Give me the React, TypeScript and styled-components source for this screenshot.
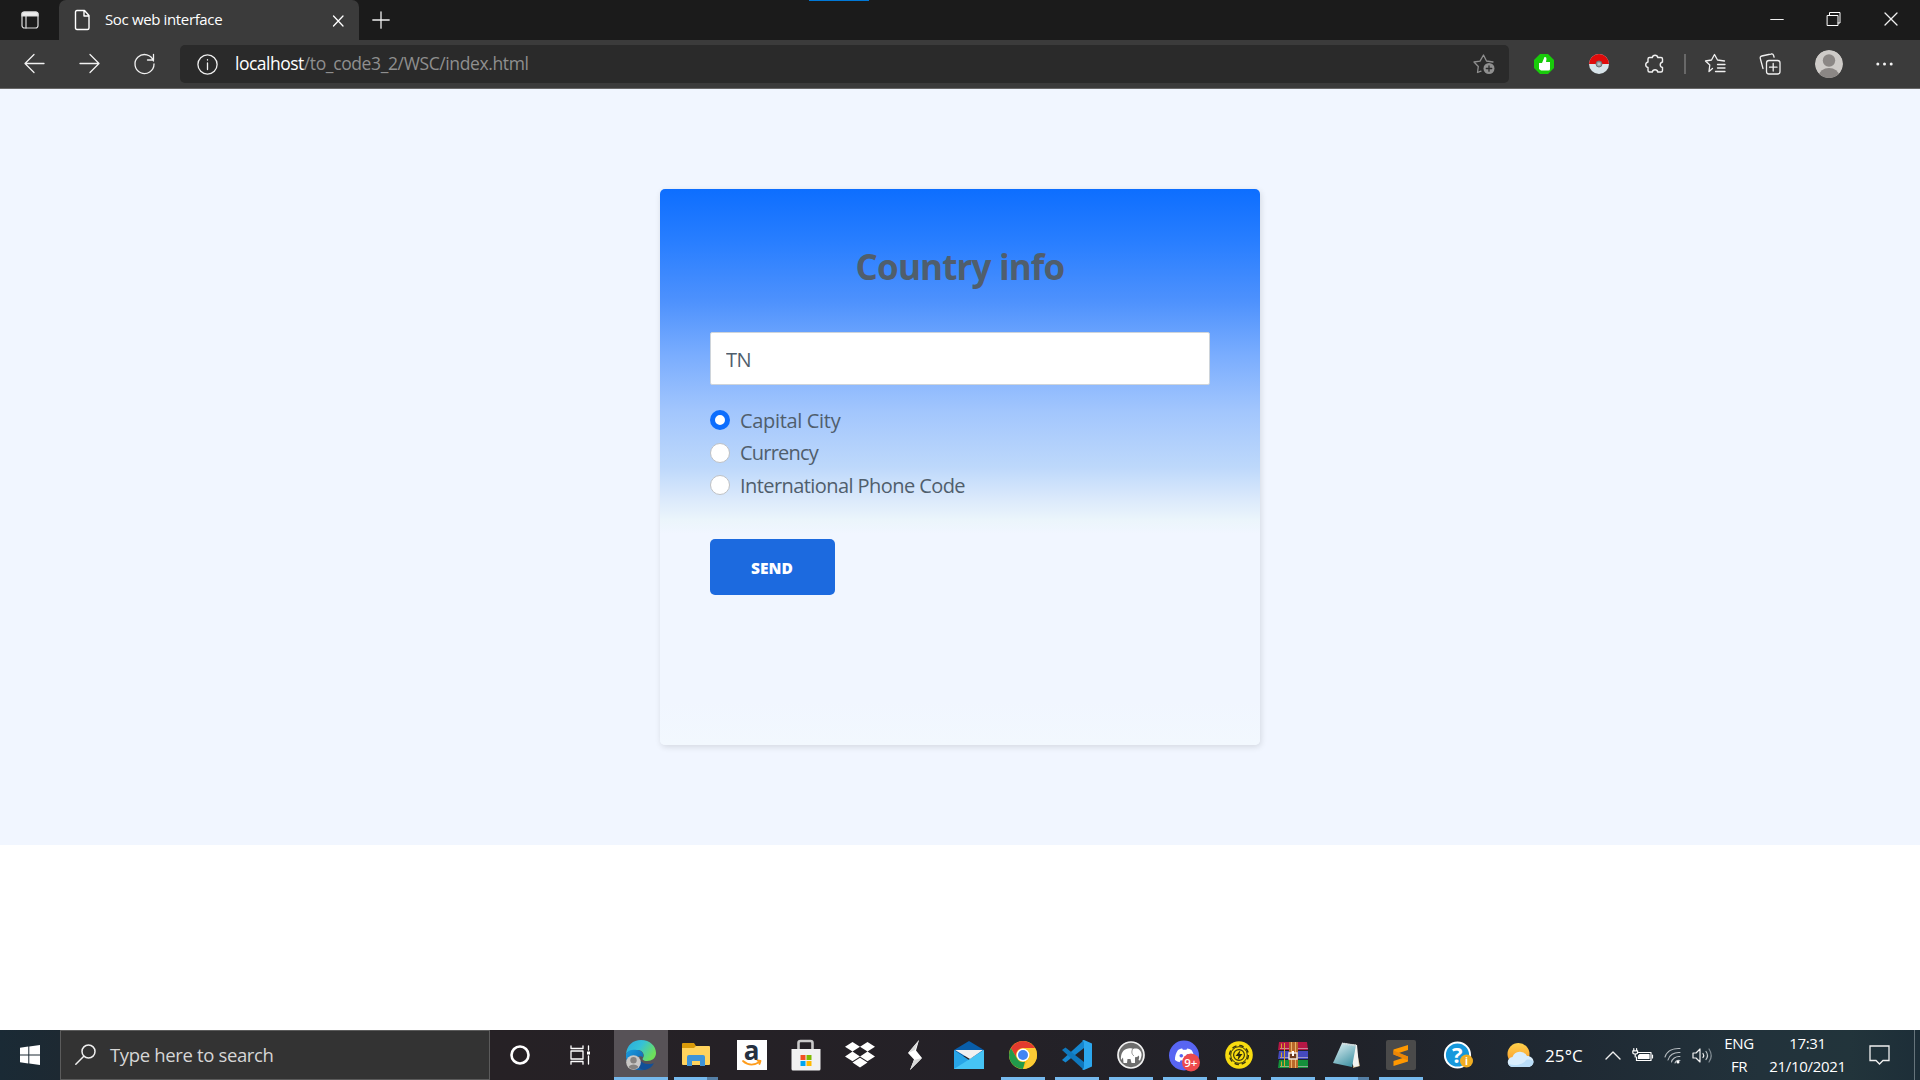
import React, { useState } from "react";
import styled, { createGlobalStyle } from "styled-components";

const GlobalStyle = createGlobalStyle`
  *, *::before, *::after { box-sizing: border-box; }
  body { margin: 0; background: #fff; overflow: hidden; }
  button, input { font: inherit; }
  svg { display: block; flex: none; overflow: visible; }
`;

const Screen = styled.div`
  width: 1920px;
  height: 1080px;
  display: flex;
  flex-direction: column;
  font-family: "Open Sans", "Noto Sans", sans-serif;
`;

/* ---------- browser chrome ---------- */
const TabStrip = styled.header`
  height: 40px;
  flex: none;
  display: flex;
  background: #1b1b1b;
  color: #fff;
`;
const TabActions = styled.div`
  width: 59px;
  display: flex;
  align-items: center;
  justify-content: center;
`;
const Tab = styled.div`
  width: 300px;
  height: 40px;
  padding: 0 13px 0 15px;
  display: flex;
  align-items: center;
  background: #3b3b3b;
  border-radius: 7px 7px 0 0;
`;
const TabTitle = styled.span`
  flex: 1;
  padding: 0 0 2px 13px;
  font-size: 15px;
  line-height: 36px;
  letter-spacing: -0.36px;
  white-space: nowrap;
`;
const NewTab = styled.div`
  width: 44px;
  padding-bottom: 1px;
  display: flex;
  align-items: center;
  justify-content: center;
`;
const LoadMark = styled.div`
  width: 60px;
  height: 1px;
  margin-left: 406px;
  background: #0078d7;
`;
const WindowControls = styled.div`
  margin-left: auto;
  display: flex;
  align-items: center;
  gap: 43px;
  padding: 0 22px 3px 0;
`;
const Toolbar = styled.nav`
  height: 49px;
  flex: none;
  display: flex;
  align-items: center;
  padding-left: 24px;
  background: #3b3b3b;
  border-bottom: 1px solid #686868;
`;
const NavButtons = styled.div`
  width: 156px;
  display: flex;
  gap: 34px;
  padding-bottom: 1px;
`;
const AddressBar = styled.div`
  width: 1329px;
  height: 38px;
  padding: 0 14px 0 17px;
  display: flex;
  align-items: center;
  background: #2a2a2a;
  border-radius: 5px;
`;
const Url = styled.span`
  flex: 1;
  padding: 0 0 2px 17px;
  color: #8f8f8f;
  font-size: 17.5px;
  line-height: 36px;
  letter-spacing: -0.38px;
`;
const Host = styled.span`
  color: #fff;
  letter-spacing: -0.5px;
`;
const Extensions = styled.div`
  flex: 1;
  display: flex;
  align-items: center;
  justify-content: space-between;
  padding: 0 27px 0 24px;
`;
const ToolDivider = styled.i`
  width: 2px;
  height: 20px;
  margin: 0 -16px 0 -14px;
  background: #686868;
`;

/* ---------- page ---------- */
const Page = styled.main`
  height: 756px;
  flex: none;
  display: flex;
  justify-content: center;
  align-items: flex-start;
  padding-top: 100px;
  background: #f1f6ff;
`;
const Card = styled.form`
  width: 600px;
  height: 556px;
  padding: 50px;
  border-radius: 5px;
  background: linear-gradient(#0d6eff 0%, #2a7fff 10%, #4d91fd 20%, #7aadfe 30%, #a2c6fd 40%, #bdd8fb 50%, #dceafb 56%, #ebf5fb 59.5%, #f1f6ff 62%, #f1f6ff 92%, #f2f8fe 100%);
  box-shadow: 1px 2px 6px rgba(0, 0, 0, 0.12);
  color: #505e6c;
`;
const Heading = styled.h1`
  margin: 0 0 33px;
  height: 60px;
  line-height: 56px;
  text-align: center;
  font-size: 35px;
  font-weight: 700;
  letter-spacing: -0.85px;
`;
const CodeInput = styled.input`
  display: block;
  width: 500px;
  height: 53px;
  padding: 1px 15px 0;
  border: 1px solid #ced4da;
  border-radius: 2px;
  background: #fff;
  color: #505e6c;
  font-size: 20px;
  letter-spacing: -0.5px;
  outline: none;
`;
const Options = styled.div`
  display: grid;
  grid-auto-rows: 32.5px;
  padding-top: 19px;
`;
const Option = styled.label`
  display: flex;
  align-items: center;
  gap: 10px;
`;
const Radio = styled.input`
  appearance: none;
  width: 20px;
  height: 20px;
  margin: 0;
  flex: none;
  border-radius: 50%;
  border: 1px solid #bfc1c4;
  background: #fff;
  &:checked {
    border: 5px solid #0d6efd;
  }
`;
const OptionText = styled.span<{ $tracking: number }>`
  padding-top: 1px;
  font-size: 20px;
  line-height: 30px;
  letter-spacing: ${(p) => p.$tracking}px;
`;
const SendButton = styled.button`
  width: 125px;
  height: 56px;
  margin-top: 37px;
  padding: 2px 1px 0 0;
  border: 0;
  border-radius: 5px;
  background: #1c6adf;
  color: #fff;
  font-size: 15.5px;
  font-weight: 800;
  letter-spacing: 0;
`;

/* ---------- taskbar ---------- */
const Taskbar = styled.footer`
  height: 50px;
  margin-top: auto;
  flex: none;
  display: flex;
  color: #fff;
  background: linear-gradient(90deg, #1a2a35 0, #1d2932 60px, #262125 490px, #242127 1000px, #202229 1350px, #1f2933 1560px, #22323b 1760px, #22343b 1850px, #1d2e38 1920px);
`;
const StartButton = styled.div`
  width: 60px;
  display: flex;
  align-items: center;
  justify-content: center;
`;
const SearchBox = styled.div`
  width: 430px;
  display: flex;
  align-items: center;
  padding: 0 0 1px 14px;
  gap: 14px;
  background: #333;
  border: 1px solid #5b5b5b;
  color: #d6d6d6;
  font-size: 18.5px;
  letter-spacing: -0.35px;
`;
const SystemButtons = styled.div`
  width: 124px;
  display: flex;
  align-items: center;
  padding-left: 20px;
  gap: 40px;
`;
const Apps = styled.div`
  display: flex;
`;
const AppCell = styled.div<{ $active?: boolean; $gap?: number }>`
  width: 54px;
  margin-right: ${(p) => p.$gap ?? 0}px;
  display: grid;
  grid-template-rows: 47px 3px;
  justify-items: center;
  background: ${(p) => (p.$active ? "#575257" : "transparent")};
`;
const AppIcon = styled.div`
  display: flex;
  align-items: center;
  padding: 3px 1px 0 0;
`;
const Indicator = styled.i<{ $kind: "wide" | "single" | "stack" }>`
  width: ${(p) => (p.$kind === "wide" ? 54 : 44)}px;
  background: ${(p) => (p.$kind === "stack" ? "linear-gradient(90deg, #76b9ed 33px, #557fa5 33px)" : "#76b9ed")};
`;
const Tray = styled.div`
  flex: 1;
  display: flex;
  align-items: center;
`;
const HelpSlot = styled.div`
  width: 31px;
  margin-left: 16px;
`;
const Weather = styled.div`
  display: flex;
  align-items: center;
  gap: 11px;
  margin-left: 32px;
  width: 98px;
  font-size: 17px;
  letter-spacing: 0.1px;
`;
const TrayIcons = styled.div`
  display: flex;
  align-items: center;
  gap: 11px;
  width: 118px;
`;
const Stacked = styled.div<{ $width: number; $tracking: number }>`
  width: ${(p) => p.$width}px;
  text-align: center;
  font-size: 15px;
  line-height: 23px;
  letter-spacing: ${(p) => p.$tracking}px;
  padding-bottom: 1px;
`;
const Notifications = styled.div`
  margin-left: 9px;
`;
const PeekEdge = styled.i`
  height: 50px;
  margin-left: auto;
  width: 6px;
  border-left: 1px solid #66747b;
`;

/* ---------- icons ---------- */
type LineProps = { w?: number; h?: number; sw?: number; color?: string; box?: string; children: React.ReactNode };
const Line = ({ w = 20, h = w, sw = 1.3, color = "#f0f0f0", box, children }: LineProps) => (
  <svg width={w} height={h} viewBox={box ?? `0 0 ${w} ${h}`} fill="none" stroke={color} strokeWidth={sw} strokeLinecap="round" strokeLinejoin="round">
    {children}
  </svg>
);
const Art = ({ w = 30, h = 30, children }: { w?: number; h?: number; children: React.ReactNode }) => (
  <svg width={w} height={h} viewBox={`0 0 ${w} ${h}`}>{children}</svg>
);

const EdgeIcon = () => (
  <Art w={32} h={32}>
    <defs>
      <linearGradient id="edgeTop" x1="0" y1="0" x2="1" y2="0.5">
        <stop offset="0" stopColor="#2aa9dc" /><stop offset=".5" stopColor="#35c1d8" /><stop offset="1" stopColor="#6ee05a" />
      </linearGradient>
      <linearGradient id="edgeBody" x1="0" y1="0" x2="1" y2="1">
        <stop offset="0" stopColor="#1b9de2" /><stop offset="1" stopColor="#0c59a4" />
      </linearGradient>
    </defs>
    <path d="M1 15C2 6 8 1 16 1c9 0 15 6 15 13 0 5-4 8-9 8-4 0-5-2-4-3 2-3 0-8-6-8C7 11 3 12 1 15z" fill="url(#edgeTop)" />
    <path d="M1 15c2-4 6-5 11-4 5 0 7 4 6 7-3-2-8 0-7 6 1 4 4 6 8 7C9 33 0 26 1 15z" fill="url(#edgeBody)" />
    <path d="M12 17c-3 7 2 14 8 14 4-1 7-3 9-7-4 2-13 2-17-7z" fill="#124f97" />
    <circle cx="8.5" cy="23.5" r="7.3" fill="#c9c7c5" />
    <circle cx="8.5" cy="21.2" r="3.2" fill="#858280" />
    <path d="M3.7 28c1-3.4 8.600-3.400 9.600 0-2.400 3-7.200 3-9.600 0z" fill="#858280" />
  </Art>
);
const ExplorerIcon = () => (
  <Art w={28} h={24}>
    <path d="M0 1q0-1 1-1h11l2 3h13v5H0z" fill="#d99a09" />
    <path d="M0 5h12l2-2h13q1 0 1 1v17q0 1-1 1H1q-1 0-1-1z" fill="#ffd35d" />
    <path d="M5 23V14q0-2 2-2h14q2 0 2 2v9h-5v-5h-8v5z" fill="#3e94d8" />
  </Art>
);
const AmazonTile = styled.div`
  width: 30px;
  height: 30px;
  background: #fff;
  color: #263140;
  display: flex;
  flex-direction: column;
  align-items: center;
  font-weight: 700;
  font-size: 26px;
  line-height: 18px;
  padding-top: 1px;
`;
const AmazonIcon = () => (
  <AmazonTile>
    <span>a</span>
    <Line w={20} h={8} sw={1.8} color="#ff9d1c"><path d="M1 2c5 4.500 11 4.500 17 .8M15.500 1.500l3 .5-1 3" /></Line>
  </AmazonTile>
);
const StoreIcon = () => (
  <Art w={30} h={31}>
    <path d="M7.500 11V3q0-2 2-2h10q2 0 2 2v8" fill="none" stroke="#c9c9c9" strokeWidth="2.600" />
    <path d="M.5 9h29v20q0 1.500-1.500 1.500H2Q.5 30.500.5 29z" fill="#f1f1f1" />
    <path d="M9.500 15h5v5h-5z" fill="#f25022" /><path d="M15.500 15h5v5h-5z" fill="#7fba00" />
    <path d="M9.500 21h5v5h-5z" fill="#00a4ef" /><path d="M15.500 21h5v5h-5z" fill="#ffb900" />
  </Art>
);
const DropboxIcon = () => (
  <Art w={30} h={26}>
    <path fill="#fff" d="M7.500 0 15 4.800 7.500 9.600 0 4.800zM22.500 0 30 4.800 22.500 9.600 15 4.800zM7.500 9.600 15 14.400 7.500 19.200 0 14.400zM22.500 9.600 30 14.400 22.500 19.200 15 14.400zM7.500 20.600 15 15.800l7.500 4.800L15 25.400z" />
  </Art>
);
const BoltIcon = () => (
  <Art w={16} h={30}>
    <path d="M12 0 9 10.500l6 7.500-12 12 4-10.500-6-6.500z" fill="#fff" />
    <path d="M12 0 8 10l-7 3zM15 18l-8 2-4 10z" fill="#d9d9d9" />
  </Art>
);
const MailIcon = () => (
  <Art w={30} h={30}>
    <path d="M0 10 15 1l15 9v6H0z" fill="#085da9" />
    <path d="M0 10v19h30V10L15 20z" fill="#28a5e7" />
    <path d="M0 29 30 10v19z" fill="#46c4f5" />
    <path d="M1 10h28L16 19z" fill="#f1f1f1" />
  </Art>
);
const ChromeIcon = () => (
  <Art w={28} h={28}>
    <circle cx="14" cy="14" r="14" fill="#fbc116" />
    <path d="M1.900 7A14 14 0 0 1 26.100 7H14a7 7 0 0 0-6 10.500z" fill="#e33b2e" />
    <path d="M1.900 7 8 17.500A7 7 0 0 0 16 20.700L14 28A14 14 0 0 1 1.900 7z" fill="#229a4b" />
    <path d="M14 7h12.100A14 14 0 0 1 14 28l6-10.500A7 7 0 0 0 14 7z" fill="#fccb35" />
    <circle cx="14" cy="14" r="6.500" fill="#fff" /><circle cx="14" cy="14" r="5" fill="#4285f4" />
  </Art>
);
const CodeIcon = () => (
  <Art w={30} h={30}>
    <path d="M22 8 3.500 22.500 0 20l22-20z" fill="#1587d0" />
    <path d="M0 10l3.500-2.500L22 22v8z" fill="#0f78bd" />
    <path d="M22 0l8 3.500v23L22 30q-1 0-2-1 2 0 2-2V3q0-2-2-2 1-1 2-1z" fill="#2ca7ee" />
  </Art>
);
const WampIcon = () => (
  <Art w={28} h={28}>
    <circle cx="14" cy="14" r="13" fill="#6d6d6d" stroke="#f2f2f2" strokeWidth="1.700" />
    <path d="M4 19C3.500 13 6 8 11 7.500c3-.5 4-.5 5 .5 4-1.500 8 .5 8.500 5 .2 2-.5 4-1.500 6.500l-1.500-.5c.8-2 .8-3.500.3-4.500-1.300 1.500-2.600 2-3.800 1.500V22h-3.500l-1-4h-3l-.5 4H6.500L6 16.500z" fill="#fff" />
    <path d="M15.500 8c-1 3-1 5 1.500 7" fill="none" stroke="#777" strokeWidth=".8" />
  </Art>
);
const BadgeText = styled.text`
  font: 600 11.500px "Open Sans", sans-serif;
  fill: #fff;
`;
const DiscordIcon = () => (
  <Art w={31} h={31}>
    <circle cx="15" cy="15.500" r="15" fill="#5865f2" />
    <path d="M9 10c2-1.200 3.600-1.500 4.200-1.500l.7 1.200h3.500l.8-1.200c1.500.2 3 .7 4.300 1.500 2 3 3 6.500 2.800 10-1.500 1.200-3 1.800-4.500 2.200l-1.100-2c-2.500.6-5.500.6-8 0l-1.200 2c-1.600-.4-3-1-4.500-2.200C5.700 16.500 7 13 9 10z" fill="#fff" />
    <circle cx="12.300" cy="15.800" r="1.800" fill="#5865f2" /><circle cx="19" cy="15.800" r="1.800" fill="#5865f2" />
    <circle cx="22" cy="22.500" r="9" fill="#ed4a4d" />
    <BadgeText x="15.200" y="26.600">9+</BadgeText>
  </Art>
);
const GearIcon = () => (
  <Art w={28} h={28}>
    <circle cx="14" cy="14" r="13.800" fill="#f8dc10" />
    <g fill="none" stroke="#3a370e">
      <circle cx="14" cy="14" r="9.400" strokeWidth="1.500" strokeDasharray="4.500 2.880" />
      <circle cx="14" cy="14" r="8.300" strokeWidth="1" />
      <circle cx="14" cy="14" r="5.400" strokeWidth="1.200" />
    </g>
    <path d="M15.500 9 10.500 15h3l-1 4.500 5-6.500h-3z" fill="#2a280e" />
  </Art>
);
const RarIcon = () => (
  <Art w={30} h={26}>
    <path d="M1 0h28l1 8H0z" fill="#b51745" /><path d="M1 9h29v8H0z" fill="#4549bd" /><path d="M1 18h29v8H0z" fill="#14913b" />
    <path d="M2 6.500h28M2 15.500h28M2 24.500h28" stroke="#d8c9cf" strokeWidth=".6" />
    <path d="M3.500 1.500v5M3.500 10.500v5M3.500 19.500v5M6.500 1v24" stroke="#d5a32d" strokeWidth="1" />
    <path d="M11 0h9v26h-9z" fill="#b9682a" /><path d="M13 0h1v26h-1zM17 0h1v26h-1z" fill="#e8b269" />
    <path d="M11 11h8v6h-8z" fill="#6d3b20" stroke="#efe7dd" strokeWidth="1.400" />
    <path d="M15 9v5" stroke="#fff" strokeWidth="2" />
  </Art>
);
const NotesIcon = () => (
  <Art w={28} h={26}>
    <defs><linearGradient id="note" x1="0" y1="0" x2=".6" y2="1"><stop offset="0" stopColor="#e5f4f7" /><stop offset="1" stopColor="#4b99a9" /></linearGradient></defs>
    <path d="M22 2l5 22-7 2z" fill="#c8ad7e" />
    <path d="M9 1l15 2 2 21-5 1z" fill="#f3f3f0" />
    <path d="M9 1l14 2-4 22-19-4z" fill="url(#note)" />
    <path d="M9 1.500l14 2" stroke="#d7dbdc" strokeWidth="2" strokeDasharray="1.300 .8" />
  </Art>
);
const SublimeIcon = () => (
  <Art>
    <rect width="30" height="30" rx="2" fill="#4a4a4a" />
    <path d="M22 5v5L12 13.300l10 3.200v5L7.500 26v-5l10-3.300-10-3.200v-5z" fill="#ff9800" />
    <path d="M7.500 14.500v-4l14.500 6v4z" fill="#ec8606" />
  </Art>
);
const QuestionText = styled.text`
  font: 700 22px "Open Sans", sans-serif;
  fill: #fff;
`;
const InfoText = styled.text`
  font: 700 10px "Open Sans", sans-serif;
  fill: #fff;
`;
const HelpIcon = () => (
  <Art w={31} h={32}>
    <circle cx="13.500" cy="16" r="12.600" fill="#1698dc" stroke="#fff" strokeWidth="2" />
    <QuestionText x="8" y="24">?</QuestionText>
    <circle cx="22.500" cy="22" r="6.500" fill="#f0ad23" />
    <InfoText x="21" y="25.700">i</InfoText>
  </Art>
);
const WeatherIcon = () => (
  <Art w={27} h={25}>
    <defs><linearGradient id="sun" x1="0" y1="0" x2="0" y2="1"><stop offset="0" stopColor="#ffd24c" /><stop offset="1" stopColor="#fa9427" /></linearGradient></defs>
    <circle cx="11.500" cy="11" r="11" fill="url(#sun)" />
    <path d="M6 24a5 5 0 0 1-.5-10 8 8 0 0 1 14.500-1c4 0 6.500 2.500 6.500 5.500S24 24 21 24z" fill="#d9edfc" />
    <path d="M6 24a5 5 0 0 1-4.500-3C8 23 16 22 19 17c2-1 5-.5 7.500 1.500 0 3-2.500 5.500-5.500 5.500z" fill="#b9ddf8" />
  </Art>
);

const options = [
  { label: "Capital City", tracking: -0.33 },
  { label: "Currency", tracking: -0.8 },
  { label: "International Phone Code", tracking: -0.57 },
];

type AppEntry = { icon: React.FC; gap?: number; kind?: "wide" | "single" | "stack" };
const apps: AppEntry[] = [
  { icon: EdgeIcon, gap: 1, kind: "wide" },
  { icon: ExplorerIcon, gap: 2, kind: "stack" },
  { icon: AmazonIcon },
  { icon: StoreIcon },
  { icon: DropboxIcon, gap: 1 },
  { icon: BoltIcon },
  { icon: MailIcon },
  { icon: ChromeIcon, kind: "single" },
  { icon: CodeIcon, kind: "single" },
  { icon: WampIcon, kind: "single" },
  { icon: DiscordIcon, kind: "single" },
  { icon: GearIcon, kind: "single" },
  { icon: RarIcon, kind: "single" },
  { icon: NotesIcon, kind: "stack" },
  { icon: SublimeIcon, kind: "single" },
];

const BrowserBar = () => (
  <>
    <TabStrip>
      <TabActions>
        <Line w={18} sw={1.2} color="#dcdcdc">
          <rect x="1" y="1" width="16" height="16" rx="2.500" />
          <path d="M1 3q0-2 2-2h12q2 0 2 2v2H1z" fill="#ececec" />
          <path d="M5 5v12" />
        </Line>
      </TabActions>
      <Tab>
        <Line w={18} h={22} sw={1.4} color="#fff">
          <path d="M3 1.500h7.500l4.500 5V19q0 1.500-1.500 1.500H3Q1.500 20.500 1.500 19V3Q1.500 1.500 3 1.500zM10 1.500V7h5" />
        </Line>
        <TabTitle>Soc web interface</TabTitle>
        <Line w={15} color="#fff"><path d="M2.500 3l9.500 10M12 3l-9.500 10" /></Line>
      </Tab>
      <NewTab><Line w={18}><path d="M9 .8v16.400M.8 9h16.400" /></Line></NewTab>
      <LoadMark />
      <WindowControls>
        <Line w={14} sw={1}><path d="M.7 7.500h12.600" /></Line>
        <Line w={14} sw={1} color="#fff"><path d="M.5 3.500h10.500V13.500H.5zM2.500 3V.5h10.500v10.500h-2" /></Line>
        <Line w={14}><path d="M1 1l12 12M13 1L1 13" /></Line>
      </WindowControls>
    </TabStrip>
    <Toolbar>
      <NavButtons>
        <Line w={21}><path d="M20 10.500H1.200M10 1.500l-9 9 9 9" /></Line>
        <Line w={21}><path d="M1 10.500h18.800M11 1.500l9 9-9 9" /></Line>
        <Line w={21}><path d="M19.500 8a9.500 9.500 0 1 0 .5 3M19.500 1.500V7h-6" /></Line>
      </NavButtons>
      <AddressBar>
        <Line w={21}><circle cx="10.500" cy="10.500" r="9.600" /><path d="M10.500 9v6.500M10.500 5.700v.4" /></Line>
        <Url><Host>localhost</Host>/to_code3_2/WSC/index.html</Url>
        <Line w={22} color="#8f8f8f">
          <path d="M8 18.200 4.500 19.500l.8-6L1 9l6-.9L10.500 2l3 6 6.500 1" />
          <circle cx="16" cy="15.500" r="5.500" fill="#8f8f8f" stroke="none" />
          <path d="M16 12.800v5.400M13.300 15.500h5.400" stroke="#2a2a2a" />
        </Line>
      </AddressBar>
      <Extensions>
        <Art w={22} h={22}>
          <path d="M7 1h8l6 6v8l-6 6H7l-6-6V7z" fill="#18cb0a" />
          <path d="M6 10h3l2.500-6q2-.5 2 2L13 9h4v7q0 1.500-1.500 1.500H8L6 16z" fill="#fff" />
        </Art>
        <Art w={22} h={22}>
          <circle cx="11" cy="11" r="10" fill="#d8e4ea" />
          <path d="M1 11a10 10 0 0 1 20 0z" fill="#df0b0b" />
          <circle cx="11" cy="11" r="3" fill="#8f999d" stroke="#6d7376" /><circle cx="11" cy="11" r="1.500" fill="#b7c0c4" />
        </Art>
        <Line w={21} sw={1.4}>
          <path d="M5.500 3.500h2.800a2.800 2.800 0 0 1 5.500 0H17q1.500 0 1.500 1.500v3a2.800 2.800 0 0 0 0 5.500v3q0 1.500-1.500 1.500h-3.200a2.800 2.800 0 0 0-5.500 0H5.500Q4 18 4 16.500v-3a2.800 2.800 0 0 1 0-5.500V5q0-1.500 1.500-1.500z" />
        </Line>
        <ToolDivider />
        <Line w={22}>
          <path d="M8.500 16 5 19l.8-6.500L1.500 8.500l6-1L10.500 2l3 5.500 7 1M13.500 12h7.500M13.500 15.500h7.500M11.500 19h9.500" transform="translate(0 -.5)" />
        </Line>
        <Line w={22}>
          <rect x="7.500" y="7.500" width="13.500" height="13.500" rx="2.500" />
          <path d="M14.200 10.500v7.500M10.500 14.200H18M4 15.500 1.300 5.500q-.5-2 1.500-2.500L12 1q2-.5 2.500 1.200l.6 2" />
        </Line>
        <Art w={28} h={28}>
          <defs><clipPath id="face"><circle cx="14" cy="14" r="14" /></clipPath></defs>
          <g clipPath="url(#face)"><circle cx="14" cy="14" r="14" fill="#cecbc8" /><circle cx="14" cy="10.500" r="6.200" fill="#8b8785" /><ellipse cx="14" cy="25.500" rx="10" ry="7.500" fill="#8b8785" /></g>
        </Art>
        <Art w={17} h={4}><g fill="#f2f2f2"><circle cx="1.800" cy="2" r="1.500" /><circle cx="8.500" cy="2" r="1.500" /><circle cx="15.200" cy="2" r="1.500" /></g></Art>
      </Extensions>
    </Toolbar>
  </>
);

const SystemBar = () => (
  <Taskbar>
    <StartButton>
      <Art w={20} h={20}><path fill="#fff" d="M0 2.800 8.300 1.600V9.500H0zM9.300 1.500 20 0v9.500H9.300zM0 10.500h8.300v8L0 17.300zM9.300 10.500H20V20L9.300 18.600z" /></Art>
    </StartButton>
    <SearchBox>
      <Line w={21} sw={1.500}><circle cx="13.500" cy="7.500" r="6.500" /><path d="M8.800 12.200.8 20.200" /></Line>
      <span>Type here to search</span>
    </SearchBox>
    <SystemButtons>
      <Line w={20} sw={2.600} color="#fff"><circle cx="10" cy="10" r="8.500" /></Line>
      <Line w={20} color="#fff">
        <path d="M1 .8v2.700h12V.8M1 19.200v-2.700h12v2.700M1 6h12v8H1zM18.500 1v4M18.500 11v8" />
        <path d="M17 6.500h3v3h-3z" fill="#fff" stroke="none" />
      </Line>
    </SystemButtons>
    <Apps>
      {apps.map(({ icon: Icon, gap, kind }, i) => (
        <AppCell key={i} $active={i === 0} $gap={gap}>
          <AppIcon><Icon /></AppIcon>
          {kind && <Indicator $kind={kind} />}
        </AppCell>
      ))}
    </Apps>
    <Tray>
      <HelpSlot><HelpIcon /></HelpSlot>
      <Weather><WeatherIcon /><span>25°C</span></Weather>
      <TrayIcons>
        <Line w={16} h={9} sw={1.400}><path d="M1 8l7-7 7 7" /></Line>
        <Line w={21} h={14} sw={1.200} color="#fff">
          <path d="M6.500 4.500H19v8H4.500V9" /><path d="M8 6.500h9v4H6.500V8z" fill="#fff" /><path d="M20.500 7v3M1.800.5v2M4.600.5v2M.8 2.800h4.800v1.700q0 1.500-2.400 1.500T.8 4.500zM3.200 6.500V9" />
        </Line>
        <Line w={17} h={17} sw={1.100}>
          <path d="M1 10C3 4 9 1 16 1.500M4 13C5 8 10 5 16 5.500M7.500 15C8 12 11.500 9 16 9.500M11 16c.5-1.500 2.500-3 5-2.500" stroke="#b8bec2" />
          <circle cx="14" cy="15" r="1.500" fill="#fff" stroke="none" />
        </Line>
        <Line w={21} h={17} sw={1.200}>
          <path d="M1 6h3l4-4v13l-4-4H1zM11 6.500q1.500 2 0 4" /><path d="M14 4.500q3 4 0 8" stroke="#c2c8cc" /><path d="M17 2q4.500 6.500 0 13" stroke="#7e8990" />
        </Line>
      </TrayIcons>
      <Stacked $width={32} $tracking={-0.4}>ENG<br />FR</Stacked>
      <Stacked $width={105} $tracking={-0.3}>17:31<br />21/10/2021</Stacked>
      <Notifications><Line w={21} h={20}><path d="M1 1h19v14.500h-6L10.500 19 7 15.500H1z" strokeLinejoin="miter" /></Line></Notifications>
      <PeekEdge />
    </Tray>
  </Taskbar>
);

export default function App() {
  const [code, setCode] = useState("TN");
  const [choice, setChoice] = useState("Capital City");
  return (
    <Screen>
      <GlobalStyle />
      <BrowserBar />
      <Page>
        <Card onSubmit={(e) => e.preventDefault()}>
          <Heading>Country info</Heading>
          <CodeInput value={code} onChange={(e) => setCode(e.target.value)} />
          <Options>
            {options.map((o) => (
              <Option key={o.label}>
                <Radio type="radio" name="info" checked={choice === o.label} onChange={() => setChoice(o.label)} />
                <OptionText $tracking={o.tracking}>{o.label}</OptionText>
              </Option>
            ))}
          </Options>
          <SendButton>SEND</SendButton>
        </Card>
      </Page>
      <SystemBar />
    </Screen>
  );
}
